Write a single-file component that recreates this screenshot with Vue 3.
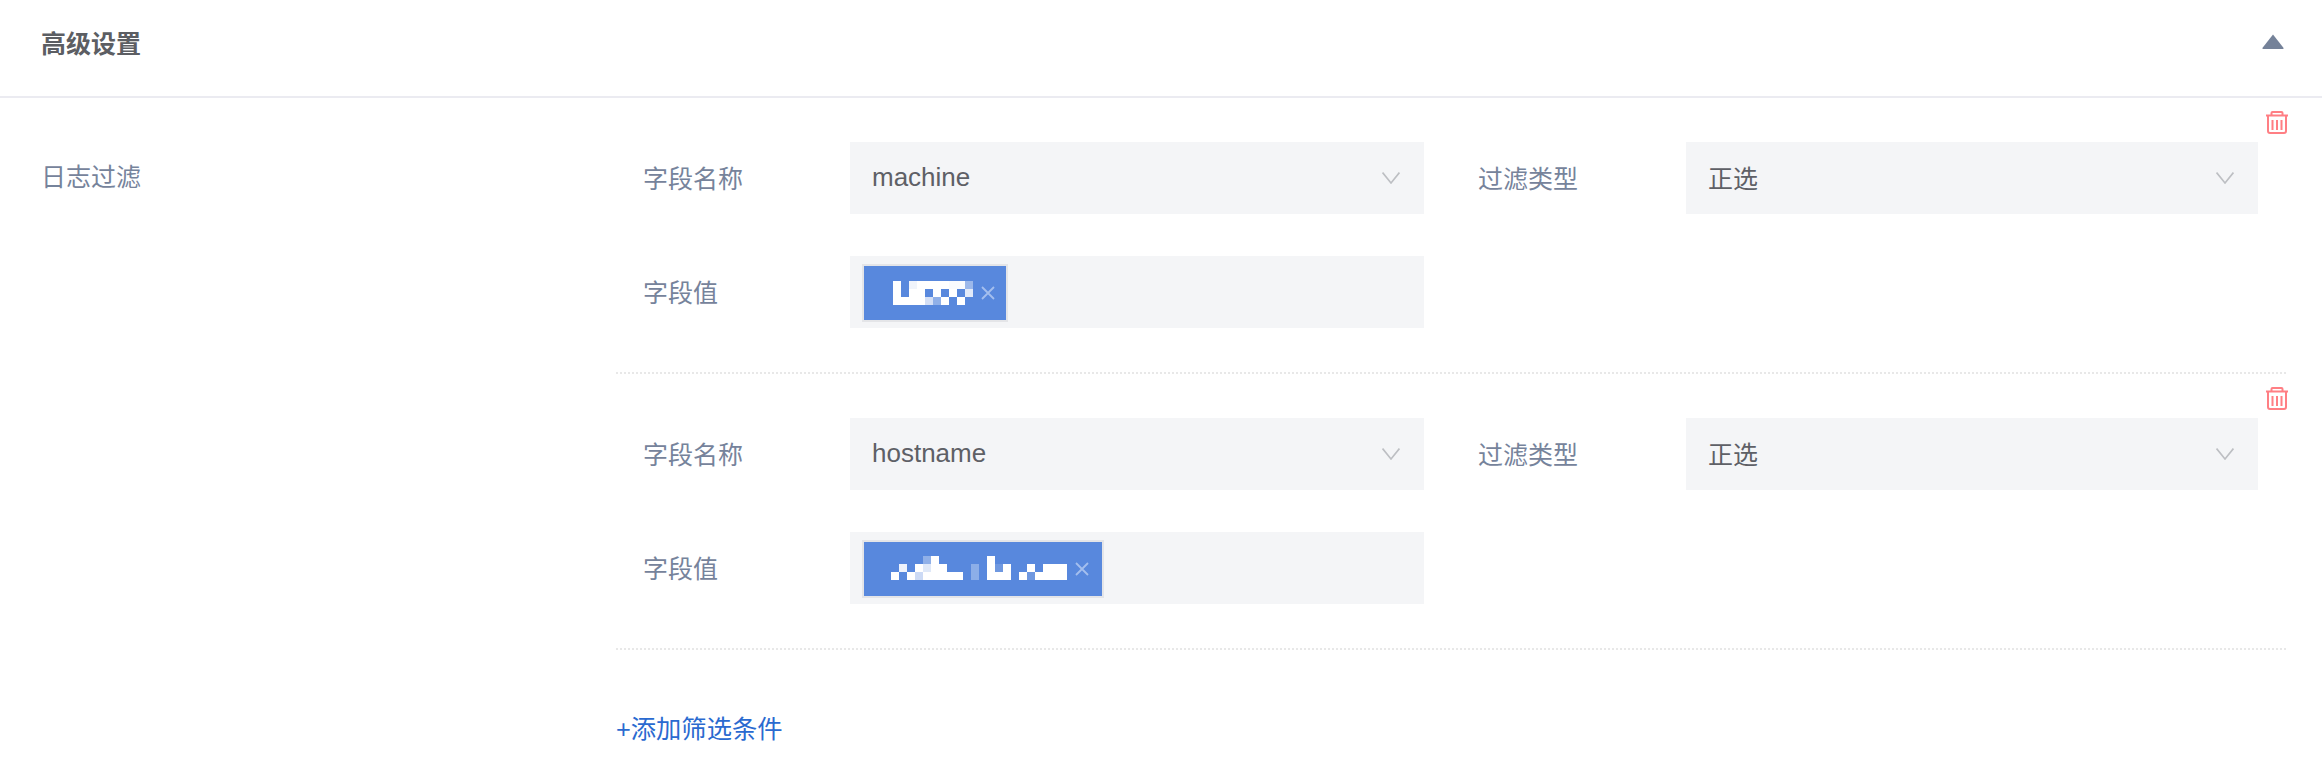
<script setup>
const filters = [
  {
    name: 'machine',
    type: '正选',
    tag: {
      width: 82,
      cells: [
        [0,0,1,'#fff'],[2,0,1,'#f0f4fb'],[3,0,4,'#fff'],[7,0,2,'#f9fbfe'],[9,0,1,'#9cb8ea'],
        [0,1,1,'#fff'],[2,1,2,'#fff'],[5,1,1,'#fff'],[7,1,1,'#fff'],[9,1,1,'#e2eaf9'],
        [0,2,4,'#fff'],[4,2,1,'#d4dff5'],[5,2,1,'#90b0e8'],[6,2,1,'#fff'],[8,2,1,'#fff']
      ].map(([x, y, w, c]) => ({ x: 2 + x * 8, y: y * 8, w: w * 8, c }))
    }
  },
  {
    name: 'hostname',
    type: '正选',
    tag: {
      width: 176,
      cells: [
        [4,0,1,'#90b0e8'],[5,0,1,'#fff'],[12,0,1,'#fff'],
        [1,1,1,'#eef2fb'],[3,1,1,'#fff'],[4,1,1,'#dfe8f8'],[5,1,2,'#fff'],[10,1,1,'#8caee8'],[12,1,1,'#fff'],[13,1,1,'#6f98e0'],[14,1,1,'#fff'],[17,1,1,'#fff'],[19,1,3,'#fff'],
        [0,2,1,'#fff'],[2,2,1,'#fff'],[3,2,1,'#ccdaf5'],[4,2,5,'#fff'],[10,2,1,'#8caee8'],[12,2,3,'#fff'],[16,2,1,'#fff'],[17,2,1,'#6f98e0'],[18,2,4,'#fff']
      ].map(([x, y, w, c]) => ({ x: x * 8, y: y * 8, w: w * 8, c }))
    }
  }
]
</script>

<template>
  <div class="page">
    <header class="head">
      <span class="head-title">高级设置</span>
      <svg class="collapse" width="22" height="15" viewBox="0 0 22 15">
        <path d="M11 0.5 L21.6 14 Q21.8 15 20.8 15 L1.2 15 Q0.2 15 0.4 14 Z" fill="#758299" />
      </svg>
    </header>
    <section class="body">
      <div class="side-label">日志过滤</div>
      <div class="filters">
        <div v-for="f in filters" :key="f.name" class="filter">
          <svg class="trash" width="22" height="23" viewBox="0 0 22 23" fill="none" stroke="#ff7f84" stroke-width="2">
            <path d="M0 4.5 H22" />
            <path d="M5.5 4 V2 Q5.5 1 6.5 1 H15.5 Q16.5 1 16.5 2 V4" />
            <path d="M2 4.5 V20 Q2 22 4 22 H18 Q20 22 20 20 V4.5" />
            <path d="M6.5 9 V19 M11 9 V19 M15.5 9 V19" />
          </svg>
          <label class="field-label">字段名称</label>
          <div class="select">
            <span class="value latin">{{ f.name }}</span>
            <svg class="chevron" width="18" height="12" viewBox="0 0 18 12" fill="none" stroke="#bdbfc3" stroke-width="1.6">
              <path d="M0.6 0.6 L9 11 L17.4 0.6" />
            </svg>
          </div>
          <span></span>
          <label class="field-label">过滤类型</label>
          <div class="select">
            <span class="value">{{ f.type }}</span>
            <svg class="chevron" width="18" height="12" viewBox="0 0 18 12" fill="none" stroke="#bdbfc3" stroke-width="1.6">
              <path d="M0.6 0.6 L9 11 L17.4 0.6" />
            </svg>
          </div>
          <label class="field-label">字段值</label>
          <div class="tag-box">
            <div class="tag">
              <svg class="mosaic" :width="f.tag.width" height="24" :viewBox="`0 0 ${f.tag.width} 24`" shape-rendering="crispEdges">
                <rect v-for="(c, i) in f.tag.cells" :key="i" :x="c.x" :y="c.y" :width="c.w" height="8" :fill="c.c" />
              </svg>
              <svg class="tag-x" width="14" height="14" viewBox="0 0 14 14" fill="none" stroke="#a4bfee" stroke-width="1.8">
                <path d="M1 1 L13 13 M13 1 L1 13" />
              </svg>
            </div>
          </div>
        </div>
        <a class="add">+添加筛选条件</a>
      </div>
    </section>
  </div>
</template>

<style scoped>
.page {
  width: 2322px;
  height: 780px;
  background: #fff;
  font-family: "Liberation Sans", "Noto Sans CJK SC", sans-serif;
  font-size: 25px;
  overflow: hidden;
}
.head {
  height: 96px;
  box-sizing: content-box;
  border-bottom: 2px solid #ebebf1;
  display: flex;
  align-items: center;
  justify-content: space-between;
  padding: 0 38px 0 41px;
}
.head-title {
  color: #5c5e63;
  font-weight: 700;
  font-size: 25px;
  margin-top: -13px;
}
.collapse {
  margin-top: -13px;
}
.body {
  display: flex;
}
.side-label {
  width: 575px;
  padding: 60px 0 0 41px;
  color: #76839b;
  line-height: 38px;
  flex: none;
  box-sizing: content-box;
}
.filters {
  width: 1672px;
}
.filter {
  position: relative;
  display: grid;
  grid-template-columns: 207px 574px 54px 208px 572px;
  grid-auto-rows: 72px;
  row-gap: 42px;
  padding: 44px 0 46px 27px;
  background: repeating-linear-gradient(90deg, #e8e8e8 0 2px, transparent 2px 4px) left bottom / 1670px 2px no-repeat;
  height: 186px;
  box-sizing: content-box;
}
.trash {
  position: absolute;
  right: 0;
  top: 13px;
}
.field-label {
  color: #76839b;
  display: flex;
  align-items: center;
  height: 72px;
  padding-bottom: 3px;
  box-sizing: border-box;
}
.select,
.tag-box {
  background: #f4f5f7;
  height: 72px;
  display: flex;
  align-items: center;
  color: #5e6066;
  box-sizing: border-box;
}
.select {
  justify-content: space-between;
  padding: 0 24px 0 22px;
}
.value {
  margin-top: -3px;
}
.value.latin {
  font-size: 26px;
  margin-top: -1px;
}
.tag-box {
  padding: 2px 12px 0;
}
.tag {
  height: 58px;
  background: #5888dd;
  border: 2px solid #e4e5e8;
  box-sizing: border-box;
  display: flex;
  align-items: center;
  padding-left: 27px;
}
.filter:nth-child(1) .tag {
  padding-right: 11px;
}
.filter:nth-child(2) .tag {
  padding-right: 13px;
}
.filter:nth-child(2) .mosaic {
  margin-top: -2px;
}
.tag-x {
  margin-left: 8px;
}
.add {
  display: block;
  margin-top: 61px;
  color: #2a6ad0;
  font-size: 25.3px;
  line-height: 36px;
  cursor: pointer;
}
</style>
